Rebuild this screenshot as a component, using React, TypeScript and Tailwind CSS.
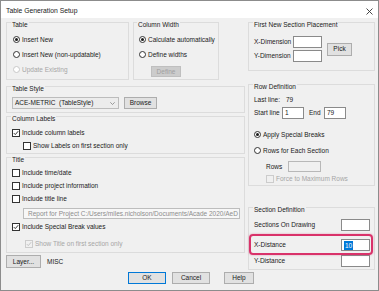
import React from "react";

type RB = { checked?: boolean; disabled?: boolean; label: string };

const Radio = ({ checked, disabled, label }: RB) => (
  <div className="flex items-center">
    <span
      className={`w-[7px] h-[7px] rounded-full border flex items-center justify-center bg-white shrink-0 ${
        disabled ? "border-[#c8c8c8]" : "border-[#333333]"
      }`}
    >
      {checked && <span className="w-[3px] h-[3px] rounded-full bg-[#1a1a1a]" />}
    </span>
    <span className={`ml-[2px] whitespace-nowrap ${disabled ? "text-[#a6a6a6]" : ""}`}>{label}</span>
  </div>
);

const Check = ({ checked, disabled, label }: RB) => (
  <div className="flex items-center">
    <span
      className={`w-[8px] h-[8px] border flex items-center justify-center shrink-0 ${
        disabled ? "border-[#cccccc] bg-[#f0f0f0]" : "border-[#333333] bg-white"
      }`}
    >
      {checked && (
        <svg width="6" height="6" viewBox="0 0 6 6">
          <path
            d="M0.8 3.1 L2.3 4.6 L5.2 1.2"
            fill="none"
            stroke={disabled ? "#bdbdbd" : "#222222"}
            strokeWidth="0.9"
          />
        </svg>
      )}
    </span>
    <span className={`ml-[2px] whitespace-nowrap ${disabled ? "text-[#a6a6a6]" : ""}`}>{label}</span>
  </div>
);

const Group = ({
  label,
  className,
  children,
}: {
  label: string;
  className: string;
  children?: React.ReactNode;
}) => (
  <div className={`border border-[#dcdcdc] flex flex-col ${className}`}>
    <span className="-mt-[2px] ml-[4px] px-[1px] bg-[#f0f0f0] self-start leading-[8px] whitespace-nowrap">
      {label}
    </span>
    {children}
  </div>
);

const Btn = ({ label, className }: { label: string; className: string }) => (
  <div
    className={`flex items-center justify-center bg-[#e1e1e1] border border-[#adadad] whitespace-nowrap ${className}`}
  >
    {label}
  </div>
);

const Input = ({ className, children }: { className: string; children?: React.ReactNode }) => (
  <div className={`bg-white border border-[#8a8a8a] flex items-center pl-[2px] ${className}`}>{children}</div>
);

export default function App() {
  return (
    <div className="w-[379px] h-[291px] bg-[#f0f0f0] border border-[#8c8c8c] font-['Liberation_Sans',Arial,sans-serif] text-[6.5px] leading-[8px] text-[#1a1a1a] overflow-hidden flex flex-col">
      {/* title bar */}
      <div className="h-[17px] bg-white flex justify-between pt-[6px] pl-[5px] pr-[5px] shrink-0">
        <span className="text-[6.8px] leading-[8px]">Table Generation Setup</span>
        <svg width="7" height="7" viewBox="0 0 7 7" className="mt-[1px]">
          <path d="M0.5 0.5 L6.5 6.5 M6.5 0.5 L0.5 6.5" stroke="#333333" strokeWidth="0.9" />
        </svg>
      </div>

      {/* body */}
      <div className="flex pl-[5px] h-[252px] shrink-0">
        {/* left column */}
        <div className="w-[239px] pt-[4px] flex flex-col">
          <div className="flex h-[58px]">
            <Group label="Table" className="w-[123px] h-[58px]">
              <div className="mt-[3px] pl-[6px] flex flex-col">
                <div className="h-[15px] flex items-center">
                  <Radio checked label="Insert New" />
                </div>
                <div className="h-[15px] flex items-center">
                  <Radio label="Insert New (non-updatable)" />
                </div>
                <div className="h-[15px] flex items-center">
                  <Radio disabled label="Update Existing" />
                </div>
              </div>
            </Group>
            <div className="ml-[4px]">
              <div className="border border-[#dcdcdc] flex flex-col w-[86px] h-[58px]">
                <span className="-mt-[2px] ml-[3px] px-[1px] bg-[#f0f0f0] self-start leading-[8px] whitespace-nowrap">
                  Column Width
                </span>
                <div className="mt-[3px] pl-[5px] flex flex-col">
                  <div className="h-[15px] flex items-center">
                    <Radio checked label="Calculate automatically" />
                  </div>
                  <div className="h-[15px] flex items-center">
                    <Radio label="Define widths" />
                  </div>
                </div>
                <div className="mt-[4px] ml-[17px] w-[30px] h-[11px] flex items-center justify-center bg-[#cccccc] border border-[#bfbfbf] text-[#a0a0a0]">
                  Define
                </div>
              </div>
            </div>
          </div>

          <Group label="Table Style" className="mt-[6px] h-[27px]">
            <div className="mt-[4px] flex items-center">
              <div className="ml-[5px] w-[107px] h-[12px] bg-[#ececec] border border-[#bcbcbc] flex items-center justify-between pl-[2px] pr-[3px]">
                <span className="whitespace-nowrap">ACE-METRIC&nbsp;&nbsp;(TableStyle)</span>
                <svg width="5" height="3" viewBox="0 0 5 3">
                  <path d="M0.3 0.3 L2.5 2.5 L4.7 0.3" fill="none" stroke="#777777" strokeWidth="0.7" />
                </svg>
              </div>
              <Btn label="Browse" className="ml-[5px] w-[33px] h-[12px]" />
            </div>
          </Group>

          <Group label="Column Labels" className="mt-[3px] h-[38px]">
            <div className="mt-[3px] flex flex-col">
              <div className="h-[13px] flex items-center pl-[5px]">
                <Check checked label="Include column labels" />
              </div>
              <div className="h-[13px] flex items-center pl-[16px]">
                <Check label="Show Labels on first section only" />
              </div>
            </div>
          </Group>

          <Group label="Title" className="mt-[3px] h-[96px]">
            <div className="mt-[2px] flex flex-col">
              <div className="h-[13px] flex items-center pl-[5px]">
                <Check label="Include time/date" />
              </div>
              <div className="h-[13px] flex items-center pl-[5px]">
                <Check label="Include project information" />
              </div>
              <div className="h-[13px] flex items-center pl-[5px]">
                <Check label="Include title line" />
              </div>
              <div className="mt-[3px] ml-[16px] w-[217px] h-[11px] bg-[#f7f7f7] border border-[#bdbdbd] text-[#8c8c8c] flex items-center pl-[4px] overflow-hidden whitespace-nowrap">
                Report for Project C:/Users/miles.nicholson/Documents/Acade 2020/AeD
              </div>
              <div className="mt-[1px] h-[13px] flex items-center pl-[5px]">
                <Check checked label="Include Special Break values" />
              </div>
              <div className="mt-[4px] h-[13px] flex items-center pl-[18px]">
                <Check checked disabled label="Show Title on first section only" />
              </div>
            </div>
          </Group>

          <div className="mt-[2px] h-[13px] flex items-center">
            <Btn label="Layer..." className="w-[35px] h-[13px]" />
            <span className="ml-[6px]">MISC</span>
          </div>
        </div>

        {/* right column */}
        <div className="ml-[3px] w-[127px] pt-[4px] flex flex-col">
          <Group label="First New Section Placement" className="h-[49px]">
            <div className="mt-[7px] flex">
              <div className="flex flex-col gap-[2px]">
                <div className="h-[12px] flex items-center">
                  <span className="w-[44px] pl-[5px] whitespace-nowrap">X-Dimension</span>
                  <Input className="w-[29px] h-[12px]" />
                </div>
                <div className="h-[12px] flex items-center">
                  <span className="w-[44px] pl-[5px] whitespace-nowrap">Y-Dimension</span>
                  <Input className="w-[29px] h-[12px]" />
                </div>
              </div>
              <Btn label="Pick" className="ml-[5px] w-[25px] h-[13px] self-center" />
            </div>
          </Group>

          <Group label="Row Definition" className="mt-[13px] h-[102px]">
            <div className="mt-[3px] h-[12px] flex items-center pl-[5px]">
              <span className="w-[32px]">Last line:</span>
              <span>79</span>
            </div>
            <div className="mt-[1px] h-[12px] flex items-center pl-[5px]">
              <span className="w-[28px] whitespace-nowrap">Start line</span>
              <Input className="w-[22px] h-[12px]">1</Input>
              <span className="ml-[5px] w-[15px]">End</span>
              <Input className="w-[22px] h-[12px]">79</Input>
            </div>
            <div className="mt-[8px] h-[15px] flex items-center pl-[5px]">
              <Radio checked label="Apply Special Breaks" />
            </div>
            <div className="mt-[1px] h-[15px] flex items-center pl-[5px]">
              <Radio label="Rows for Each Section" />
            </div>
            <div className="mt-[3px] h-[11px] flex items-center pl-[17px]">
              <span className="w-[22px]">Rows</span>
              <div className="w-[33px] h-[11px] bg-[#f0f0f0] border border-[#b8b8b8]" />
            </div>
            <div className="mt-[1px] h-[11px] flex items-center pl-[17px]">
              <Check disabled label="Force to Maximum Rows" />
            </div>
          </Group>

          <div className="relative mt-[21px]">
            <Group label="Section Definition" className="h-[63px]">
              <div className="mt-[5px] h-[12px] flex items-center pl-[5px] pr-[4px]">
                <span className="flex-1 whitespace-nowrap">Sections On Drawing</span>
                <Input className="w-[29px] h-[12px]" />
              </div>
              <div className="mt-[8px] h-[12px] flex items-center pl-[5px] pr-[4px]">
                <span className="flex-1 whitespace-nowrap">X-Distance</span>
                <Input className="w-[29px] h-[12px]">
                  <span className="bg-[#0078d7] text-white px-[1px] leading-[9px]">10</span>
                </Input>
              </div>
              <div className="mt-[4px] h-[12px] flex items-center pl-[5px] pr-[4px]">
                <span className="flex-1 whitespace-nowrap">Y-Distance</span>
                <Input className="w-[29px] h-[12px]" />
              </div>
            </Group>
            <div className="absolute left-[1px] top-[27px] w-[124px] h-[21px] rounded-[4px] border-2 border-[#d9326a] shadow-[0_0_2px_rgba(217,50,106,0.5)]" />
          </div>
        </div>
      </div>

      {/* buttons */}
      <div className="mt-[2px] h-[12px] flex shrink-0">
        <div className="ml-[127px] w-[38px] h-[12px] flex items-center justify-center bg-[#e1e1e1] border border-[#0078d7]">
          OK
        </div>
        <Btn label="Cancel" className="ml-[6px] w-[38px] h-[12px]" />
        <Btn label="Help" className="ml-[14px] w-[30px] h-[12px]" />
      </div>
    </div>
  );
}
